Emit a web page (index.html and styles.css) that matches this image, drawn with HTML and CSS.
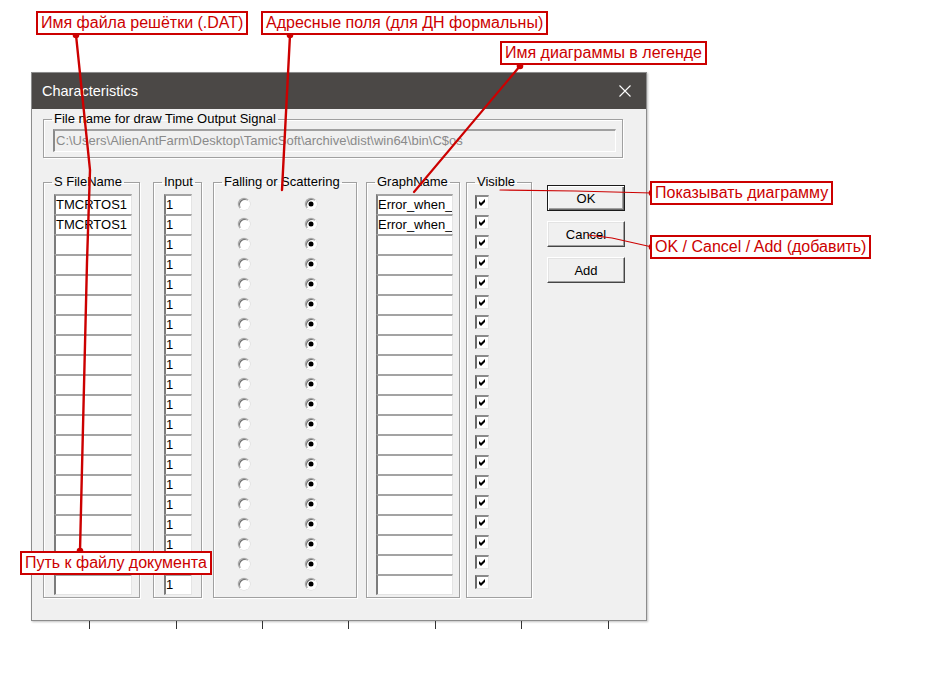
FILE: index.html
```html
<!DOCTYPE html>
<html lang="ru">
<head>
<meta charset="utf-8">
<title>Characteristics</title>
<link rel="stylesheet" href="styles.css">
</head>
<body>
<div class="page">
  <svg width="0" height="0" class="defs">
    <defs>
      <symbol id="chk" viewBox="0 0 7 7"><path d="M0 2 L2 4 L6 0 L6 3 L2 7 L0 5 Z" fill="#000"/></symbol>
    </defs>
  </svg>
  <div class="dialog">
    <div class="titlebar">
      <span class="title">Characteristics</span>
      <svg class="close" width="12" height="12" viewBox="0 0 12 12"><path d="M0.5 0.5 L11.5 11.5 M11.5 0.5 L0.5 11.5" stroke="#fff" stroke-width="1.1" fill="none"/></svg>
    </div>
    <div class="client">
      <fieldset class="grp file-grp">
        <legend>File name for draw Time Output Signal</legend>
        <div class="path-edit">C:\Users\AlienAntFarm\Desktop\TamicSoft\archive\dist\win64\bin\C$os</div>
      </fieldset>
      <div class="cols">
        <fieldset class="grp g-sfile">
          <legend>S FileName</legend>
          <div class="edits">
            <div class="edit">TMCRTOS1</div><div class="edit">TMCRTOS1</div>
            <div class="edit"></div><div class="edit"></div><div class="edit"></div><div class="edit"></div>
            <div class="edit"></div><div class="edit"></div><div class="edit"></div><div class="edit"></div>
            <div class="edit"></div><div class="edit"></div><div class="edit"></div><div class="edit"></div>
            <div class="edit"></div><div class="edit"></div><div class="edit"></div><div class="edit"></div>
            <div class="edit"></div><div class="edit"></div>
          </div>
        </fieldset>
        <fieldset class="grp g-input">
          <legend>Input</legend>
          <div class="edits">
            <div class="edit">1</div><div class="edit">1</div><div class="edit">1</div><div class="edit">1</div>
            <div class="edit">1</div><div class="edit">1</div><div class="edit">1</div><div class="edit">1</div>
            <div class="edit">1</div><div class="edit">1</div><div class="edit">1</div><div class="edit">1</div>
            <div class="edit">1</div><div class="edit">1</div><div class="edit">1</div><div class="edit">1</div>
            <div class="edit">1</div><div class="edit">1</div><div class="edit">1</div><div class="edit">1</div>
          </div>
        </fieldset>
        <fieldset class="grp g-fall">
          <legend>Falling or Scattering</legend>
          <div class="radios">
            <span class="radio"></span><span class="radio on"></span>
            <span class="radio"></span><span class="radio on"></span>
            <span class="radio"></span><span class="radio on"></span>
            <span class="radio"></span><span class="radio on"></span>
            <span class="radio"></span><span class="radio on"></span>
            <span class="radio"></span><span class="radio on"></span>
            <span class="radio"></span><span class="radio on"></span>
            <span class="radio"></span><span class="radio on"></span>
            <span class="radio"></span><span class="radio on"></span>
            <span class="radio"></span><span class="radio on"></span>
            <span class="radio"></span><span class="radio on"></span>
            <span class="radio"></span><span class="radio on"></span>
            <span class="radio"></span><span class="radio on"></span>
            <span class="radio"></span><span class="radio on"></span>
            <span class="radio"></span><span class="radio on"></span>
            <span class="radio"></span><span class="radio on"></span>
            <span class="radio"></span><span class="radio on"></span>
            <span class="radio"></span><span class="radio on"></span>
            <span class="radio"></span><span class="radio on"></span>
            <span class="radio"></span><span class="radio on"></span>
          </div>
        </fieldset>
        <fieldset class="grp g-graph">
          <legend>GraphName</legend>
          <div class="edits">
            <div class="edit">Error_when_</div><div class="edit">Error_when_</div>
            <div class="edit"></div><div class="edit"></div><div class="edit"></div><div class="edit"></div>
            <div class="edit"></div><div class="edit"></div><div class="edit"></div><div class="edit"></div>
            <div class="edit"></div><div class="edit"></div><div class="edit"></div><div class="edit"></div>
            <div class="edit"></div><div class="edit"></div><div class="edit"></div><div class="edit"></div>
            <div class="edit"></div><div class="edit"></div>
          </div>
        </fieldset>
        <fieldset class="grp g-vis">
          <legend>Visible</legend>
          <div class="checks">
            <span class="check"><svg width="7" height="7"><use href="#chk"/></svg></span>
            <span class="check"><svg width="7" height="7"><use href="#chk"/></svg></span>
            <span class="check"><svg width="7" height="7"><use href="#chk"/></svg></span>
            <span class="check"><svg width="7" height="7"><use href="#chk"/></svg></span>
            <span class="check"><svg width="7" height="7"><use href="#chk"/></svg></span>
            <span class="check"><svg width="7" height="7"><use href="#chk"/></svg></span>
            <span class="check"><svg width="7" height="7"><use href="#chk"/></svg></span>
            <span class="check"><svg width="7" height="7"><use href="#chk"/></svg></span>
            <span class="check"><svg width="7" height="7"><use href="#chk"/></svg></span>
            <span class="check"><svg width="7" height="7"><use href="#chk"/></svg></span>
            <span class="check"><svg width="7" height="7"><use href="#chk"/></svg></span>
            <span class="check"><svg width="7" height="7"><use href="#chk"/></svg></span>
            <span class="check"><svg width="7" height="7"><use href="#chk"/></svg></span>
            <span class="check"><svg width="7" height="7"><use href="#chk"/></svg></span>
            <span class="check"><svg width="7" height="7"><use href="#chk"/></svg></span>
            <span class="check"><svg width="7" height="7"><use href="#chk"/></svg></span>
            <span class="check"><svg width="7" height="7"><use href="#chk"/></svg></span>
            <span class="check"><svg width="7" height="7"><use href="#chk"/></svg></span>
            <span class="check"><svg width="7" height="7"><use href="#chk"/></svg></span>
            <span class="check"><svg width="7" height="7"><use href="#chk"/></svg></span>
          </div>
        </fieldset>
        <div class="buttons">
          <button class="btn btn-default">OK</button>
          <button class="btn">Cancel</button>
          <button class="btn">Add</button>
        </div>
      </div>
    </div>
  </div>

  <svg class="overlay" width="950" height="687" viewBox="0 0 950 687">
    <g class="ticks" stroke="#333" stroke-width="1">
      <line x1="89.5" y1="621" x2="89.5" y2="629"/>
      <line x1="176.5" y1="621" x2="176.5" y2="629"/>
      <line x1="262.5" y1="621" x2="262.5" y2="629"/>
      <line x1="348.5" y1="621" x2="348.5" y2="629"/>
      <line x1="435.5" y1="621" x2="435.5" y2="629"/>
      <line x1="521.5" y1="621" x2="521.5" y2="629"/>
      <line x1="608.5" y1="621" x2="608.5" y2="629"/>
    </g>
    <g stroke="#cc0000" fill="none" stroke-linecap="round" stroke-linejoin="round">
      <polyline points="76,35 90,170 87,262 80,551" stroke-width="2.4"/>
      <line x1="290" y1="35" x2="282" y2="190" stroke-width="2.4"/>
      <line x1="520" y1="66" x2="414" y2="192" stroke-width="2.2"/>
      <polyline points="500,190 575,191 652,193" stroke-width="1.2"/>
      <polyline points="588,235 612,238 652,247" stroke-width="1.2"/>
    </g>
    <g fill="#cc0000">
      <circle cx="76" cy="35" r="3.3"/>
      <circle cx="290" cy="35" r="3.3"/>
      <circle cx="520" cy="66" r="3.3"/>
      <circle cx="652" cy="193" r="3.3"/>
      <circle cx="652" cy="247" r="3.3"/>
      <circle cx="80" cy="551" r="3.3"/>
    </g>
  </svg>

  <div class="note n1">Имя файла решётки (.DAT)</div>
  <div class="note n2">Адресные поля (для ДН формальны)</div>
  <div class="note n3">Имя диаграммы в легенде</div>
  <div class="note n4">Показывать диаграмму</div>
  <div class="note n5">OK / Cancel / Add (добавить)</div>
  <div class="note n6">Путь к файлу документа</div>
</div>
</body>
</html>
```

FILE: styles.css
```css
* { box-sizing: border-box; }

html, body {
  margin: 0;
  padding: 0;
  background: #fff;
}

.page {
  position: relative;
  width: 950px;
  height: 687px;
  overflow: hidden;
  font-family: "Liberation Sans", Arial, sans-serif;
  padding-top: 72px;
  padding-left: 31px;
}

.defs {
  position: absolute;
}

/* ---------- dialog ---------- */
.dialog {
  width: 616px;
  border: 1px solid #8c8c8c;
  background: #f0f0f0;
  box-shadow: 1px 1px 2px rgba(0, 0, 0, 0.25);
}

.titlebar {
  height: 36px;
  background: #4b4846;
  display: flex;
  align-items: center;
  justify-content: space-between;
  padding: 0 15px 0 10px;
}

.title {
  color: #fff;
  font-size: 14.5px;
  line-height: 18px;
}

.close {
  display: block;
}

.client {
  padding: 2px 0 22px 11px;
}

/* group boxes */
.grp {
  margin: 0;
  padding: 0;
  min-inline-size: 0;
  border: 1px solid #a0a0a0;
  box-shadow: inset 1px 1px 0 #fff, 1px 1px 0 #fff;
}

.grp legend {
  margin: 0 0 0 8px;
  padding: 0 2px;
  font-size: 13px;
  line-height: 16px;
  color: #000;
  white-space: nowrap;
}

.file-grp {
  width: 580px;
}

.path-edit {
  width: 563px;
  height: 23px;
  margin: 2px 0 5px 9px;
  border-style: solid;
  border-width: 2px 1px 1px 2px;
  border-color: #a0a0a0 #fff #fff #8a8a8a;
  background: #f0f0f0;
  color: #8a8a8a;
  font-size: 13px;
  line-height: 20px;
  padding-left: 1px;
  white-space: nowrap;
  overflow: hidden;
}

.cols {
  display: flex;
  align-items: stretch;
  margin-top: 16px;
}

.g-sfile { width: 97px; }
.g-input { width: 49px; margin-left: 13px; }
.g-fall  { width: 144px; margin-left: 11px; }
.g-graph { width: 94px; margin-left: 9px; }
.g-vis   { width: 66px; margin-left: 6px; }

.edits {
  display: flex;
  flex-direction: column;
  margin-top: 4px;
  margin-bottom: 2px;
}

.g-sfile .edits { width: 78px; margin-left: 10px; }
.g-input .edits { width: 28px; margin-left: 10px; }
.g-graph .edits { width: 77px; margin-left: 9px; }

.edit {
  height: 20px;
  border-top: 2px solid #a3a3a3;
  border-left: 2px solid #7c7c7c;
  border-right: 1px solid #e4e4e4;
  background: #fff;
  font-size: 13px;
  line-height: 18px;
  color: #000;
  white-space: nowrap;
  overflow: hidden;
}

.edit:last-child {
  height: 21px;
  border-bottom: 1px solid #e4e4e4;
}

/* radios */
.radios {
  display: grid;
  grid-template-columns: 12px 12px;
  grid-auto-rows: 20px;
  column-gap: 55px;
  align-items: center;
  margin: 4px 0 0 24px;
}

.radio {
  width: 12px;
  height: 12px;
  border-radius: 50%;
  background: #fff;
  border: 1px solid;
  border-color: #a0a0a0 #fff #fff #a0a0a0;
  box-shadow: inset 1px 1px 0 #6f6f6f, 0 0 0 0.5px #d8d8d8;
  display: flex;
  align-items: center;
  justify-content: center;
}

.radio.on::after {
  content: "";
  width: 4px;
  height: 4px;
  border-radius: 50%;
  background: #000;
  box-shadow: 0 0 0 0.5px #000;
}

/* checkboxes */
.checks {
  display: grid;
  grid-auto-rows: 20px;
  margin: 4px 0 0 8px;
}

.check {
  width: 14px;
  height: 14px;
  margin-top: 1px;
  background: #fff;
  border-style: solid;
  border-width: 2px 1px 1px 2px;
  border-color: #8a8a8a #e6e6e6 #e6e6e6 #6a6a6a;
  display: flex;
  align-items: center;
  justify-content: center;
}

.check svg { display: block; }

/* buttons */
.buttons {
  display: flex;
  flex-direction: column;
  gap: 10px;
  margin-left: 15px;
  margin-top: 11px;
  align-self: flex-start;
}

.btn {
  width: 78px;
  height: 26px;
  padding: 0;
  margin: 0;
  background: #f0f0f0;
  font-family: "Liberation Sans", Arial, sans-serif;
  font-size: 13px;
  color: #000;
  border: 1px solid;
  border-color: #fff #454545 #454545 #fff;
  box-shadow: inset -1px -1px 0 #a0a0a0, inset 1px 1px 0 #e3e3e3;
}

.btn-default {
  border-color: #1a1a1a;
  box-shadow: inset 1px 1px 0 #fff, inset -1px -1px 0 #6a6a6a, inset -2px -2px 0 #a0a0a0;
}

/* ---------- annotations ---------- */
.overlay {
  position: absolute;
  left: 0;
  top: 0;
  pointer-events: none;
}

.note {
  position: absolute;
  border: 2px solid #cc0000;
  background: #fff;
  color: #cc0000;
  font-family: "Liberation Sans", Arial, sans-serif;
  font-size: 16px;
  line-height: 20px;
  padding: 0 3px;
  white-space: nowrap;
}

.n1 { left: 36px; top: 11px; }
.n2 { left: 261px; top: 11px; }
.n3 { left: 500px; top: 41px; }
.n4 { left: 650px; top: 181px; }
.n5 { left: 650px; top: 235px; }
.n6 { left: 20px; top: 551px; }
```
